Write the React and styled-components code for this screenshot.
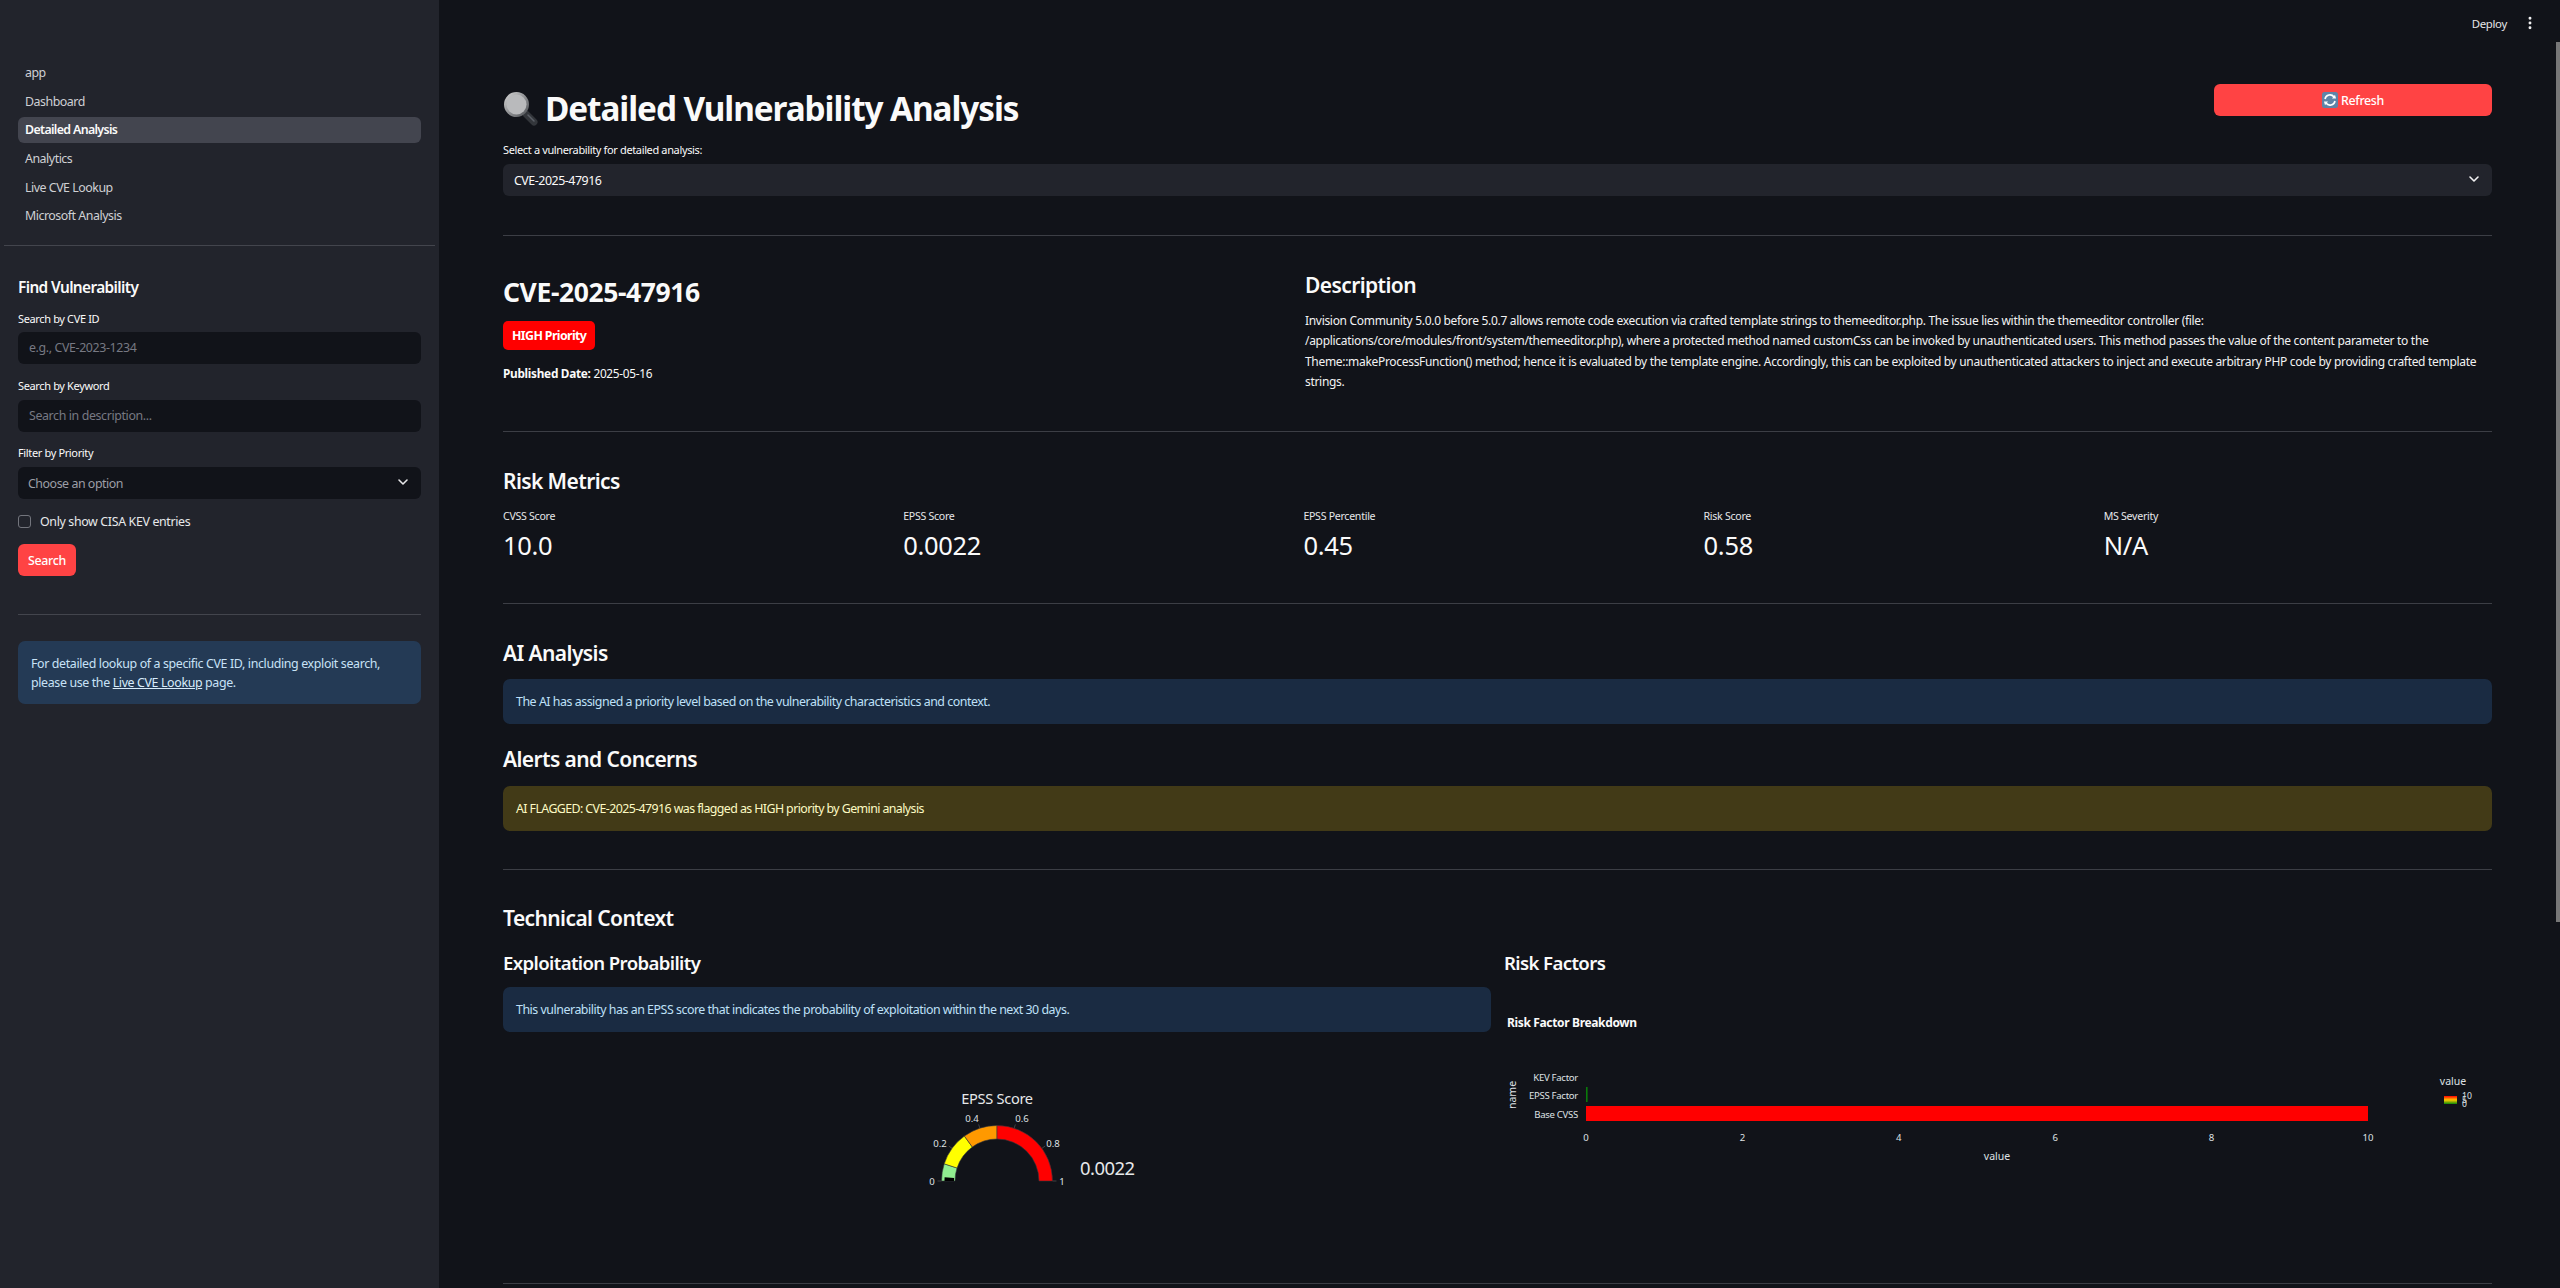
import React from 'react';
import styled, { createGlobalStyle } from 'styled-components';
import { ChevronDown, EllipsisVertical } from 'lucide-react';

const FONT = '"Noto Sans", "Open Sans", sans-serif';

const GlobalStyle = createGlobalStyle`
  html, body, #root {
    margin: 0;
    height: 1288px;
    overflow: hidden;
    background: #111319;
  }
  * { box-sizing: border-box; }
  body {
    font-family: ${FONT};
    color: #fafafa;
  }
`;

const Page = styled.div`
  display: flex;
  width: 2560px;
  height: 1288px;
  position: relative;
`;

/* sidebar */
const Sidebar = styled.aside`
  width: 439px;
  flex: none;
  height: 100%;
  background: #22242c;
  padding-top: 60px;
`;

const Nav = styled.nav`
  display: flex;
  flex-direction: column;
  gap: 2.7px;
  padding: 0 18px;
`;

const NavItem = styled.a`
  height: 26px;
  line-height: 26px;
  padding: 0 7px;
  border-radius: 6px;
  font-size: 12.4px;
  letter-spacing: ${p => (p.$active ? '-0.65px' : '-0.48px')};
  font-weight: ${p => (p.$active ? 600 : 400)};
  color: ${p => (p.$active ? '#fafafa' : '#cfd0d4')};
  background: ${p => (p.$active ? '#43454f' : 'transparent')};
`;

const NavRule = styled.hr`
  margin: 16px 4px 0;
  border: 0;
  height: 1px;
  background: #43454d;
`;

const SidePanel = styled.div`
  padding: 30px 18px 0;
`;

const PanelTitle = styled.h3`
  margin: 0 0 11px;
  font-size: 15.4px;
  line-height: 24px;
  font-weight: 600;
  letter-spacing: -0.62px;
`;

const FieldLabel = styled.label`
  display: block;
  margin-top: ${p => p.$top || 0}px;
  height: 16px;
  line-height: 16px;
  font-size: 11px;
  letter-spacing: -0.36px;
  color: #fafafa;
`;

const TextInput = styled.div`
  margin-top: ${p => p.$top || 5}px;
  height: 32px;
  line-height: 32px;
  padding: 0 11px;
  border-radius: 6px;
  background: #111319;
  font-size: 12.4px;
  letter-spacing: -0.38px;
  color: #777983;
`;

const SelectBox = styled.div`
  margin-top: ${p => p.$top || 6}px;
  height: 32px;
  display: flex;
  align-items: center;
  justify-content: space-between;
  padding: 0 10px 0 ${p => p.$inset || 11}px;
  border-radius: 6px;
  background: ${p => p.$bg || '#22242c'};
  font-size: 12.4px;
  letter-spacing: -0.46px;
  color: ${p => p.$color || '#fafafa'};
  svg { margin-top: -2px; }
`;

const CheckRow = styled.div`
  margin-top: 16px;
  display: flex;
  align-items: center;
  gap: 9px;
  height: 13px;
  font-size: 12.4px;
  letter-spacing: -0.35px;
  color: #e8e9eb;
`;

const CheckBox = styled.span`
  width: 13px;
  height: 13px;
  border: 1px solid #73757d;
  border-radius: 3px;
  background: #22242c;
`;

const SearchButton = styled.button`
  display: block;
  margin-top: 16px;
  width: 58px;
  height: 32px;
  padding: 0;
  border: 0;
  border-radius: 6px;
  background: #ff4344;
  color: #fff;
  font: 500 12.4px ${FONT};
  letter-spacing: -0.35px;
`;

const PanelRule = styled.hr`
  margin: 38px 0 0;
  border: 0;
  height: 1px;
  background: #43454d;
`;

const SideNote = styled.div`
  margin-top: 26px;
  height: 63px;
  padding: 12.5px 13px;
  border-radius: 7px;
  background: #243a55;
  color: #c8e2f7;
  font-size: 12.4px;
  line-height: 19px;
  letter-spacing: -0.36px;
  a {
    color: #d8ecfb;
    text-decoration: underline;
  }
`;

/* main column */
const Main = styled.main`
  flex: 1;
  min-width: 0;
  padding: 0 68px 0 64px;
`;

const Toolbar = styled.div`
  height: 46px;
  margin-right: -68px;
  padding-right: 22px;
  display: flex;
  align-items: center;
  justify-content: flex-end;
  gap: 15px;
  font-size: 11.4px;
  letter-spacing: -0.3px;
  color: #e4e5e7;
`;

const TitleRow = styled.div`
  margin-top: 38px;
  display: flex;
  justify-content: space-between;
  align-items: flex-start;
`;

const PageTitle = styled.h1`
  margin: 0;
  display: flex;
  align-items: center;
  gap: 7px;
  height: 48px;
  font-size: 33.3px;
  font-weight: 700;
  letter-spacing: -1.07px;
  color: #fafafa;
`;

const RefreshButton = styled.button`
  width: 278px;
  height: 32px;
  display: flex;
  align-items: center;
  justify-content: center;
  gap: 3px;
  padding: 0;
  border: 0;
  border-radius: 6px;
  background: #ff4344;
  color: #fff;
  font: 500 12.4px ${FONT};
  letter-spacing: -0.35px;
`;

const Rule = styled.hr`
  margin: ${p => p.$top || 0}px 0 0;
  border: 0;
  height: 1px;
  background: #3c3e45;
`;

const DetailRow = styled.section`
  display: grid;
  grid-template-columns: 786px 1187px;
  gap: 16px;
  height: 195px;
`;

const CveTitle = styled.h2`
  margin: 38px 0 0;
  line-height: 36px;
  font-size: 26.5px;
  font-weight: 700;
  letter-spacing: -0.4px;
`;

const PriorityBadge = styled.span`
  display: inline-block;
  margin-top: 11px;
  height: 29px;
  line-height: 29px;
  padding: 0 9px;
  border-radius: 5px;
  background: #ff0000;
  color: #fff;
  font-size: 12.4px;
  font-weight: 700;
  letter-spacing: -0.62px;
`;

const Published = styled.p`
  margin: 14px 0 0;
  line-height: 18px;
  font-size: 11.8px;
  letter-spacing: -0.28px;
  b { font-weight: 700; }
`;

const SectionTitle = styled.h2`
  margin: ${p => p.$top || 34}px 0 0;
  line-height: 30px;
  font-size: 21px;
  font-weight: 600;
  letter-spacing: -0.6px;
  color: #fafafa;
`;

const SubTitle = styled.h3`
  margin: ${p => p.$top || 0}px 0 0;
  line-height: 28px;
  font-size: 18.6px;
  font-weight: 600;
  letter-spacing: -0.62px;
`;

const Prose = styled.p`
  margin: 10.7px 0 0;
  font-size: 12px;
  line-height: 20.6px;
  letter-spacing: -0.31px;
  color: #f2f2f3;
`;

const MetricSection = styled.section`
  display: flow-root;
  height: 171px;
`;

const MetricGrid = styled.div`
  margin-top: 12px;
  display: grid;
  grid-template-columns: repeat(5, 400.2px);
`;

const MetricLabel = styled.div`
  height: 16px;
  line-height: 16px;
  font-size: 10.6px;
  letter-spacing: -0.28px;
  color: #e6e7e9;
`;

const MetricValue = styled.div`
  margin-top: 3px;
  line-height: 36px;
  font-size: 25.5px;
  letter-spacing: -0.3px;
  color: #fafafa;
`;

const AiSection = styled.section`
  display: flow-root;
  height: 265px;
`;

const Callout = styled.div`
  margin-top: ${p => p.$top || 11}px;
  height: 45px;
  line-height: 45px;
  padding: 0 13px;
  border-radius: 7px;
  font-size: 12.4px;
  letter-spacing: ${p => (p.$tone === 'warn' ? '-0.59px' : '-0.47px')};
  background: ${p => (p.$tone === 'warn' ? '#423a17' : '#1a2b42')};
  color: ${p => (p.$tone === 'warn' ? '#fdfac4' : '#bfe0f8')};
`;

const TechSection = styled.section`
  display: flow-root;
  height: 413px;
`;

const TechColumns = styled.div`
  margin-top: 16px;
  display: grid;
  grid-template-columns: 988px 988px;
  gap: 13px;
`;

const ChartFrame = styled.svg`
  display: block;
  margin-top: ${p => p.$top}px;
  font-family: ${FONT};
`;

const ScrollThumb = styled.div`
  position: absolute;
  right: 0;
  top: 42px;
  width: 4px;
  height: 880px;
  background: #777;
`;

const MagnifierEmoji = () => (
  <svg width="35" height="35" viewBox="0 0 35 35">
    <defs>
      <linearGradient id="rim" x1="0" y1="0" x2="1" y2="1">
        <stop offset="0" stopColor="#d9d9d9" />
        <stop offset="1" stopColor="#4a4d52" />
      </linearGradient>
    </defs>
    <line x1="23" y1="23" x2="31" y2="31" stroke="#33363b" strokeWidth="7" strokeLinecap="round" />
    <line x1="25" y1="24" x2="31" y2="30" stroke="#5b5f66" strokeWidth="1.5" strokeLinecap="round" />
    <circle cx="13.5" cy="13.5" r="12.5" fill="url(#rim)" />
    <circle cx="13.5" cy="13.5" r="10" fill="#b9babc" />
  </svg>
);

const RefreshEmoji = () => (
  <svg width="16" height="16" viewBox="0 0 16 16">
    <rect width="16" height="16" rx="2.5" fill="#5f84a8" />
    <path d="M3 7 A5 5 0 0 1 12 5" fill="none" stroke="#fff" strokeWidth="1.6" />
    <path d="M10 6.4 L14 6.6 L13 2.8 Z" fill="#fff" />
    <path d="M13 9 A5 5 0 0 1 4 11" fill="none" stroke="#fff" strokeWidth="1.6" />
    <path d="M6 9.6 L2 9.4 L3 13.2 Z" fill="#fff" />
  </svg>
);

const GAUGE = { cx: 494, cy: 111, outer: 55.5, inner: 42 };

const polar = (value, radius) => {
  const a = Math.PI * (1 - value);
  return [GAUGE.cx + radius * Math.cos(a), GAUGE.cy - radius * Math.sin(a)];
};

const ringSlice = (from, to, outer = GAUGE.outer, inner = GAUGE.inner) => {
  const [x1, y1] = polar(from, outer);
  const [x2, y2] = polar(to, outer);
  const [x3, y3] = polar(to, inner);
  const [x4, y4] = polar(from, inner);
  return `M${x1} ${y1} A${outer} ${outer} 0 0 1 ${x2} ${y2} L${x3} ${y3} A${inner} ${inner} 0 0 0 ${x4} ${y4} Z`;
};

const GAUGE_STEPS = [
  [0, 0.1, '#90ee90'],
  [0.1, 0.3, '#ffff00'],
  [0.3, 0.5, '#ff9900'],
  [0.5, 1, '#ff0000'],
];

const GAUGE_TICKS = [
  ['0', 429, 111],
  ['0.2', 437, 73],
  ['0.4', 469, 48],
  ['0.6', 519, 48],
  ['0.8', 550, 73],
  ['1', 559, 111],
];

const EpssGauge = () => (
  <ChartFrame $top={38} width="988" height="190" viewBox="0 0 988 190">
    <text x="494" y="34" textAnchor="middle" fontSize="14.6" fill="#e6e8ea" letterSpacing="-0.3">EPSS Score</text>
    {GAUGE_STEPS.map(([from, to, color]) => (
      <path key={from} d={ringSlice(from, to)} fill={color} stroke="#33353b" strokeWidth="0.6" />
    ))}
    <path d={ringSlice(0, 0.022, GAUGE.outer - 3, GAUGE.inner + 1)} fill="#000" />
    {[0, 0.2, 0.4, 0.6, 0.8, 1].map(v => {
      const [x1, y1] = polar(v, GAUGE.outer);
      const [x2, y2] = polar(v, GAUGE.outer + 4);
      return <line key={v} x1={x1} y1={y1} x2={x2} y2={y2} stroke="#555" strokeWidth="0.7" />;
    })}
    {GAUGE_TICKS.map(([label, x, y]) => (
      <text key={label} x={x} y={y + 4} textAnchor="middle" fontSize="9.6" fill="#dfe1e4">{label}</text>
    ))}
    <text x="577" y="105" fontSize="18.4" fill="#e6e8ea" letterSpacing="-0.5">0.0022</text>
  </ChartFrame>
);

const BAR_LABELS = [
  ['KEV Factor', 77],
  ['EPSS Factor', 95],
  ['Base CVSS', 114],
];

const BAR_TICKS = [0, 2, 4, 6, 8, 10];

const RiskChart = () => (
  <ChartFrame $top={23} width="988" height="180" viewBox="0 0 988 180">
    <defs>
      <linearGradient id="valueScale" x1="0" y1="0" x2="0" y2="1">
        <stop offset="0" stopColor="#ff0000" />
        <stop offset="0.5" stopColor="#ffcc00" />
        <stop offset="1" stopColor="#0a8a0a" />
      </linearGradient>
    </defs>
    <text x="3" y="27" fontSize="12" fontWeight="700" fill="#fafafa" letterSpacing="-0.35">Risk Factor Breakdown</text>
    {BAR_LABELS.map(([label, y]) => (
      <text key={label} x="74" y={y + 3.5} textAnchor="end" fontSize="9.6" fill="#dfe1e4" letterSpacing="-0.3">{label}</text>
    ))}
    <text transform="translate(11.5 95) rotate(-90)" textAnchor="middle" fontSize="10.5" fill="#dfe1e4">name</text>
    <rect x="82" y="87" width="1.6" height="15" fill="#0a7a0a" />
    <rect x="82" y="106" width="782" height="15" fill="#ff0000" />
    {BAR_TICKS.map(v => (
      <text key={v} x={82 + v * 78.2} y="141" textAnchor="middle" fontSize="9.6" fill="#dfe1e4">{v}</text>
    ))}
    <text x="493" y="160" textAnchor="middle" fontSize="10.5" fill="#dfe1e4">value</text>
    <text x="949" y="85" textAnchor="middle" fontSize="10.5" fill="#dfe1e4">value</text>
    <rect x="940" y="96" width="13" height="8" fill="url(#valueScale)" />
    <text x="958" y="99" fontSize="8.6" fill="#dfe1e4">10</text>
    <text x="958" y="103" fontSize="8.6" fill="#dfe1e4">5</text>
    <text x="958" y="107" fontSize="8.6" fill="#dfe1e4">0</text>
  </ChartFrame>
);

const METRICS = [
  ['CVSS Score', '10.0'],
  ['EPSS Score', '0.0022'],
  ['EPSS Percentile', '0.45'],
  ['Risk Score', '0.58'],
  ['MS Severity', 'N/A'],
];

const NAV = ['app', 'Dashboard', 'Detailed Analysis', 'Analytics', 'Live CVE Lookup', 'Microsoft Analysis'];

export default function App() {
  return (
    <Page>
      <GlobalStyle />
      <Sidebar>
        <Nav>
          {NAV.map(item => (
            <NavItem key={item} $active={item === 'Detailed Analysis'}>{item}</NavItem>
          ))}
        </Nav>
        <NavRule />
        <SidePanel>
          <PanelTitle>Find Vulnerability</PanelTitle>
          <FieldLabel>Search by CVE ID</FieldLabel>
          <TextInput>e.g., CVE-2023-1234</TextInput>
          <FieldLabel $top={14}>Search by Keyword</FieldLabel>
          <TextInput $top={6}>Search in description...</TextInput>
          <FieldLabel $top={13}>Filter by Priority</FieldLabel>
          <SelectBox $bg="#111319" $color="#9c9ea6" $inset={10}>
            Choose an option
            <ChevronDown size={16} strokeWidth={2.4} color="#e6e6e8" />
          </SelectBox>
          <CheckRow>
            <CheckBox />
            Only show CISA KEV entries
          </CheckRow>
          <SearchButton>Search</SearchButton>
          <PanelRule />
          <SideNote>
            For detailed lookup of a specific CVE ID, including exploit search,
            please use the <a>Live CVE Lookup</a> page.
          </SideNote>
        </SidePanel>
      </Sidebar>

      <Main>
        <Toolbar>
          Deploy
          <EllipsisVertical size={16} strokeWidth={2.4} color="#f2f2f3" />
        </Toolbar>

        <TitleRow>
          <PageTitle>
            <MagnifierEmoji />
            Detailed Vulnerability Analysis
          </PageTitle>
          <RefreshButton>
            <RefreshEmoji />
            Refresh
          </RefreshButton>
        </TitleRow>

        <FieldLabel $top={10}>Select a vulnerability for detailed analysis:</FieldLabel>
        <SelectBox>
          CVE-2025-47916
          <ChevronDown size={16} strokeWidth={2.4} color="#f2f2f3" />
        </SelectBox>
        <Rule $top={39} />

        <DetailRow>
          <div>
            <CveTitle>CVE-2025-47916</CveTitle>
            <PriorityBadge>HIGH Priority</PriorityBadge>
            <Published><b>Published Date:</b> 2025-05-16</Published>
          </div>
          <div>
            <SectionTitle $top={34}>Description</SectionTitle>
            <Prose>
              Invision Community 5.0.0 before 5.0.7 allows remote code execution via crafted template strings to themeeditor.php. The issue lies within the themeeditor controller (file: /applications/core/modules/front/system/themeeditor.php), where a protected method named customCss can be invoked by unauthenticated users. This method passes the value of the content parameter to the Theme::makeProcessFunction() method; hence it is evaluated by the template engine. Accordingly, this can be exploited by unauthenticated attackers to inject and execute arbitrary PHP code by providing crafted template strings.
            </Prose>
          </div>
        </DetailRow>
        <Rule />

        <MetricSection>
          <SectionTitle>Risk Metrics</SectionTitle>
          <MetricGrid>
            {METRICS.map(([label, value]) => (
              <div key={label}>
                <MetricLabel>{label}</MetricLabel>
                <MetricValue>{value}</MetricValue>
              </div>
            ))}
          </MetricGrid>
        </MetricSection>
        <Rule />

        <AiSection>
          <SectionTitle>AI Analysis</SectionTitle>
          <Callout>The AI has assigned a priority level based on the vulnerability characteristics and context.</Callout>
          <SectionTitle $top={20}>Alerts and Concerns</SectionTitle>
          <Callout $tone="warn" $top={12}>AI FLAGGED: CVE-2025-47916 was flagged as HIGH priority by Gemini analysis</Callout>
        </AiSection>
        <Rule />

        <TechSection>
          <SectionTitle $top={33}>Technical Context</SectionTitle>
          <TechColumns>
            <div>
              <SubTitle>Exploitation Probability</SubTitle>
              <Callout $top={10}>This vulnerability has an EPSS score that indicates the probability of exploitation within the next 30 days.</Callout>
              <EpssGauge />
            </div>
            <div>
              <SubTitle>Risk Factors</SubTitle>
              <RiskChart />
            </div>
          </TechColumns>
        </TechSection>
        <Rule />
      </Main>
      <ScrollThumb />
    </Page>
  );
}
